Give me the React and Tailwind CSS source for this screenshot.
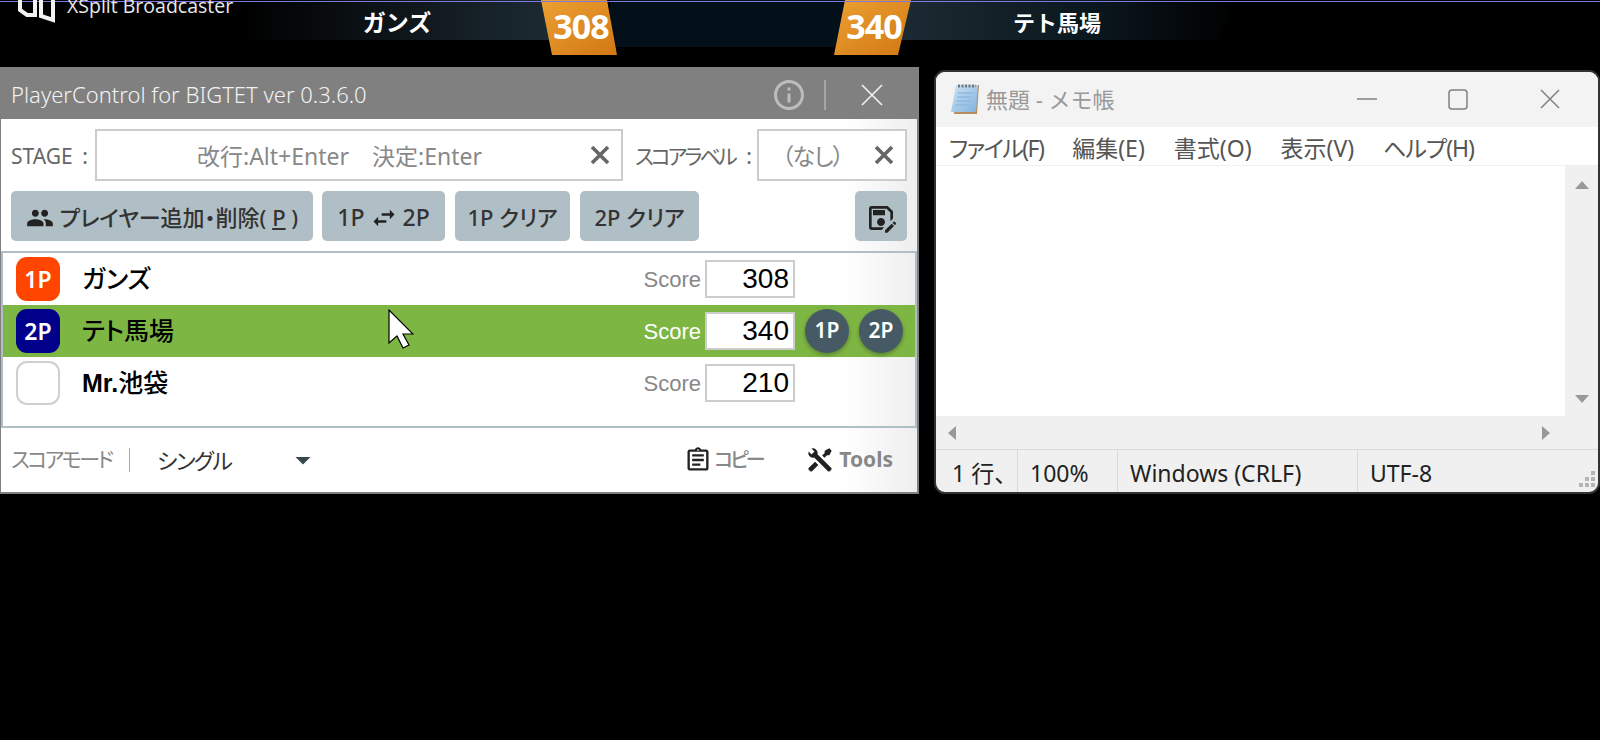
import { MdPeople, MdSwapHoriz, MdOutlineSaveAs, MdOutlineAssignment, MdInfoOutline, MdArrowDropDown } from 'react-icons/md';

const players = [
  { id: 1, badge: '1P', badgeClass: 'bg-[#ff4500] text-white', name: 'ガンズ', score: 308 },
  { id: 2, badge: '2P', badgeClass: 'bg-[#00008b] text-white', name: 'テト馬場', score: 340, active: true },
  { id: 3, badge: '', badgeClass: 'bg-white border-2 border-[#cfcfcf]', name: <><b>Mr.</b>池袋</>, score: 210 },
];

function ScoreBoard() {
  return (
    <div className="relative h-[67px] shrink-0 overflow-hidden">
      <svg className="absolute inset-0" width="1600" height="67" viewBox="0 0 1600 67">
        <defs>
          <linearGradient id="bandL" x1="0" x2="1" y1="0" y2="0">
            <stop offset="0" stopColor="#000" />
            <stop offset="1" stopColor="#1c2a33" />
          </linearGradient>
          <linearGradient id="bandR" x1="0" x2="1" y1="0" y2="0">
            <stop offset="0" stopColor="#1c2a33" />
            <stop offset="0.6" stopColor="#0a161d" />
            <stop offset="1" stopColor="#000" />
          </linearGradient>
          <linearGradient id="orange" x1="0" x2="1" y1="0" y2="1">
            <stop offset="0" stopColor="#eca032" />
            <stop offset="1" stopColor="#d27815" />
          </linearGradient>
        </defs>
        <rect x="240" y="0" width="310" height="40" fill="url(#bandL)" />
        <rect x="610" y="0" width="240" height="47" fill="#03101a" />
        <polygon points="900,0 1236,0 1219,40 900,40" fill="url(#bandR)" />
        <polygon points="541,0 607,0 617,55 552,55" fill="url(#orange)" />
        <polygon points="845,0 911,0 898,55 834,55" fill="url(#orange)" />
        <rect x="0" y="1" width="1600" height="1" fill="#7b7be0" />
        <path d="M20 0V10L27 15H35V0M41 0V16L53 20V0" fill="none" stroke="#f2f2f2" strokeWidth="4" />
      </svg>
      <div className="relative flex h-full items-start font-['Noto_Sans','Noto_Sans_CJK_JP',sans-serif] text-white">
        <div className="w-[245px] pl-[67px] -mt-[9px] text-[19.5px] text-[#e8e8e8] whitespace-nowrap font-['Open_Sans',sans-serif]">XSplit Broadcaster</div>
        <div className="w-[304px] pt-[5px] text-center text-[23px] leading-[34px] font-bold">ガンズ</div>
        <div className="w-[64px] pt-[6px] text-center text-[34px] leading-[40px] font-bold tracking-[-1px]">308</div>
        <div className="w-[232px]"></div>
        <div className="w-[58px] pt-[6px] text-center text-[34px] leading-[40px] font-bold tracking-[-1px]">340</div>
        <div className="w-[308px] pt-[5px] text-center text-[22px] leading-[34px] font-bold">テト馬場</div>
      </div>
    </div>
  );
}

function BoldX() {
  return (
    <svg className="mr-[11px] shrink-0" width="20" height="20" viewBox="0 0 20 20" fill="none" stroke="#666666" strokeWidth="3.6">
      <path d="M2 2l16 16M18 2L2 18" />
    </svg>
  );
}

function ClearInput({ text, className, textClass }) {
  return (
    <div className={`flex h-[52px] items-center border-2 border-[#cccccc] bg-white ${className}`}>
      <span className={`flex-1 whitespace-nowrap pt-[3px] text-[23px] text-[#888888] ${textClass}`}>{text}</span>
      <BoldX />
    </div>
  );
}

function ToolButton({ children, className }) {
  return (
    <button className={`flex h-[50px] items-center justify-center rounded-[5px] bg-[#b0bec5] pt-[3px] text-[22px] font-medium text-[#333333] ${className}`}>
      {children}
    </button>
  );
}

function PlayerRow({ player }) {
  return (
    <div className={`relative flex h-[52px] items-center pl-[13px] pr-[12px] ${player.active ? 'bg-[#7eb644]' : ''}`}>
      <div className={`flex h-[44px] w-[44px] items-center justify-center rounded-[11px] text-[23px] font-semibold ${player.badgeClass}`}>
        {player.badge}
      </div>
      <div className="ml-[22px] flex-1 pt-[2px] font-['Liberation_Sans','Noto_Sans_CJK_JP',sans-serif] text-[25px] font-medium text-black">{player.name}</div>
      <span className={`font-['Liberation_Sans',sans-serif] text-[22px] ${player.active ? 'text-white' : 'text-[#888888]'}`}>Score</span>
      <div className="ml-[4px] flex h-[38px] w-[90px] items-center justify-end border-2 border-[#cccccc] bg-white pr-[4px] font-['Liberation_Sans',sans-serif] text-[28px] text-black">
        {player.score}
      </div>
      <div className="ml-[10px] flex w-[98px] justify-between">
        {player.active && (
          <>
            <div className="flex h-[44px] w-[44px] items-center justify-center rounded-full bg-[#455a64] text-[21px] font-semibold text-white shadow-[0_2px_4px_rgba(0,0,0,0.3)]">1P</div>
            <div className="flex h-[44px] w-[44px] items-center justify-center rounded-full bg-[#455a64] text-[21px] font-semibold text-white shadow-[0_2px_4px_rgba(0,0,0,0.3)]">2P</div>
          </>
        )}
      </div>
      {player.active && (
        <svg className="absolute left-[385px] top-[4px]" width="26" height="40" viewBox="0 0 26 40">
          <path d="M1 1v33l8-7 6 12 6-3-6-11h10z" fill="#fff" stroke="#000" strokeWidth="1.2" />
        </svg>
      )}
    </div>
  );
}

function PlayerControl() {
  return (
    <div className="flex h-[427px] w-[919px] shrink-0 flex-col border-b-2 border-l border-r-2 border-[#808080] bg-[linear-gradient(to_right,#ffffff_92%,#eeeeee)] font-['Noto_Sans','Noto_Sans_CJK_JP',sans-serif] [font-feature-settings:'palt']">
      <div className="flex h-[52px] shrink-0 items-center bg-[#808080] pl-[10px] text-[#f2f2f2]">
        <span className="pt-[3px] text-[22px] font-light whitespace-nowrap">PlayerControl for BIGTET ver 0.3.6.0</span>
        <MdInfoOutline className="ml-auto mt-[3px] text-[#bdbdbd]" size={36} />
        <div className="ml-[17px] mt-[3px] h-[30px] w-[2px] bg-[#a6a6a6]"></div>
        <svg className="ml-[35px] mr-[34px] mt-[3px]" width="22" height="22" viewBox="0 0 22 22" fill="none" stroke="#f2f2f2" strokeWidth="1.6">
          <path d="M1 1l20 20M21 1L1 21" />
        </svg>
      </div>

      <div className="flex items-center pl-[10px] pr-[10px] pt-[10px]">
        <span className="flex w-[84px] justify-between whitespace-nowrap pr-[7px] pt-[3px] text-[21px] text-[#666666]"><span>STAGE</span><span>:</span></span>
        <ClearInput className="w-[528px] pl-[100px]" text="改行:Alt+Enter　決定:Enter" />
        <span className="ml-[12px] flex w-[122px] justify-between whitespace-nowrap pr-[8px] pt-[3px] text-[21px] tracking-[-3px] text-[#666666]"><span>スコアラベル</span><span>:</span></span>
        <ClearInput className="w-[150px] pl-[23px]" textClass="tracking-[-1px]" text="（なし）" />
      </div>

      <div className="mt-[10px] flex gap-[10px] pl-[10px] pr-[10px]">
        <ToolButton className="mr-[-1px] w-[302px] gap-[6px]"><MdPeople className="text-[#222222]" size={28} /><span>プレイヤー追加・削除( <u>P</u> )</span></ToolButton>
        <ToolButton className="w-[123px] gap-[5px] text-[23px]"><span>1P</span><MdSwapHoriz size={28} className="text-[#222222]" /><span>2P</span></ToolButton>
        <ToolButton className="w-[115px]">1P クリア</ToolButton>
        <ToolButton className="w-[119px]">2P クリア</ToolButton>
        <ToolButton className="ml-auto w-[52px]"><MdOutlineSaveAs size={32} className="text-[#222222]" /></ToolButton>
      </div>

      <div className="mt-[10px] h-[177px] border-2 border-[#b0bec5]">
        {players.map((p) => <PlayerRow key={p.id} player={p} />)}
      </div>

      <div className="flex flex-1 items-center pl-[10px] pr-[24px]">
        <span className="w-[106px] whitespace-nowrap text-[21px] tracking-[-2.5px] text-[#888888]">スコアモード</span>
        <div className="ml-[12px] h-[24px] w-px bg-[#aaaaaa]"></div>
        <span className="ml-[27px] w-[128px] text-[22px] tracking-[-1.5px] text-[#333333]">シングル</span>
        <MdArrowDropDown className="text-[#37474f]" size={36} />
        <MdOutlineAssignment className="ml-auto text-[#222222]" size={28} />
        <span className="ml-[2px] w-[46px] whitespace-nowrap text-[20px] tracking-[-3px] font-medium text-[#888888]">コピー</span>
        <svg className="ml-[46px] text-[#222222]" width="28" height="28" viewBox="0 0 24 24" fill="currentColor">
          <path d="M21.71 20.29L20.29 21.71A1 1 0 0 1 18.88 21.71L7 9.85A3.81 3.81 0 0 1 6 10A4 4 0 0 1 2.22 4.7L4.76 7.24L5.29 6.71L6.71 5.29L7.24 4.76L4.7 2.22A4 4 0 0 1 10 6A3.81 3.81 0 0 1 9.85 7L21.71 18.88A1 1 0 0 1 21.71 20.29M2.29 18.88A1 1 0 0 0 2.29 20.29L3.71 21.71A1 1 0 0 0 5.12 21.71L10.59 16.25L7.76 13.42M20 2L16 4V6L13.83 8.17L15.83 10.17L18 8H20L22 4Z" />
        </svg>
        <span className="ml-[5px] text-[21px] font-bold text-[#888888]">Tools</span>
      </div>
    </div>
  );
}

function NotepadIcon() {
  return (
    <svg width="32" height="33" viewBox="0 0 32 33">
      <defs>
        <linearGradient id="pad" x1="0" x2="1" y1="0" y2="1">
          <stop offset="0" stopColor="#cfe4f5" />
          <stop offset="1" stopColor="#7fb2dc" />
        </linearGradient>
      </defs>
      <polygon points="8,2 30,2 28,31 5,31" fill="#b58e5c" />
      <polygon points="7,2 29,2 27,29 2,29" fill="url(#pad)" />
      <path d="M9 10h15M8 14h15M7 18h15M6 22h15" stroke="#8fbbe0" strokeWidth="1.5" />
      <path d="M9 3h18" stroke="#777" strokeWidth="3" strokeDasharray="2 1.5" />
    </svg>
  );
}

function Notepad() {
  return (
    <div className="ml-[15px] mt-[3px] flex h-[424px] w-[666px] flex-col overflow-hidden rounded-[11px] border-2 border-[#333333] bg-[#f0f0f0] font-['Noto_Sans','Noto_Sans_CJK_JP',sans-serif]">
      <div className="flex h-[55px] shrink-0 items-center bg-[#f3f3f3] pl-[13px]">
        <NotepadIcon />
        <span className="ml-[5px] text-[22px] text-[#999999]">無題 - メモ帳</span>
        <svg className="ml-auto" width="204" height="24" viewBox="0 0 204 24" fill="none" stroke="#808080" strokeWidth="1.5">
          <path d="M0 11h20" />
          <rect x="92" y="2" width="18" height="19" rx="3" />
          <path d="M184 2l18 18M202 2l-18 18" />
        </svg>
        <div className="w-[37px]"></div>
      </div>
      <div className="flex h-[38px] shrink-0 items-center gap-[29px] bg-white pl-[13px] pt-[4px] text-[23px] text-[#555555] [font-feature-settings:'palt']">
        <span className="tracking-[-1.6px]">ファイル(F)</span>
        <span>編集(E)</span>
        <span>書式(O)</span>
        <span>表示(V)</span>
        <span className="tracking-[-1px]">ヘルプ(H)</span>
      </div>
      <div className="flex min-h-0 flex-1">
        <div className="flex flex-1 flex-col">
          <div className="mt-px flex-1 bg-white"></div>
          <div className="flex h-[33px] shrink-0 items-center justify-between pl-[11px] pr-[14px] text-[#999999]">
            <svg width="10" height="14" viewBox="0 0 10 14"><polygon points="9,0 9,14 1,7" fill="currentColor" /></svg>
            <svg width="10" height="14" viewBox="0 0 10 14"><polygon points="1,0 1,14 9,7" fill="currentColor" /></svg>
          </div>
        </div>
        <div className="flex w-[33px] shrink-0 flex-col items-center pb-[45px] pt-[15px] text-[#999999]">
          <svg width="14" height="10" viewBox="0 0 14 10"><polygon points="0,9 14,9 7,1" fill="currentColor" /></svg>
          <svg className="mt-auto" width="14" height="10" viewBox="0 0 14 10"><polygon points="0,1 14,1 7,9" fill="currentColor" /></svg>
        </div>
      </div>
      <div className="relative flex h-[43px] shrink-0 items-center border-t border-[#d9d9d9] text-[23px] text-[#222222]">
        <div className="h-full w-[82px] overflow-hidden whitespace-nowrap border-r border-[#d9d9d9] pl-[16px] leading-[46px]">1 行、1 列</div>
        <div className="h-full w-[100px] border-r border-[#d9d9d9] pl-[12px] leading-[46px]">100%</div>
        <div className="h-full w-[240px] border-r border-[#d9d9d9] pl-[12px] leading-[46px]">Windows (CRLF)</div>
        <div className="h-full pl-[12px] leading-[46px]">UTF-8</div>
        <svg className="absolute bottom-[4px] right-[2px]" width="17" height="17" viewBox="0 0 17 17" fill="#b5b5b5">
          <rect x="12" y="0" width="4" height="4" /><rect x="6" y="6" width="4" height="4" /><rect x="12" y="6" width="4" height="4" />
          <rect x="0" y="12" width="4" height="4" /><rect x="6" y="12" width="4" height="4" /><rect x="12" y="12" width="4" height="4" />
        </svg>
      </div>
    </div>
  );
}

export default function App() {
  return (
    <div className="flex h-[740px] w-[1600px] flex-col overflow-hidden bg-black">
      <ScoreBoard />
      <div className="flex items-start">
        <PlayerControl />
        <Notepad />
      </div>
    </div>
  );
}
